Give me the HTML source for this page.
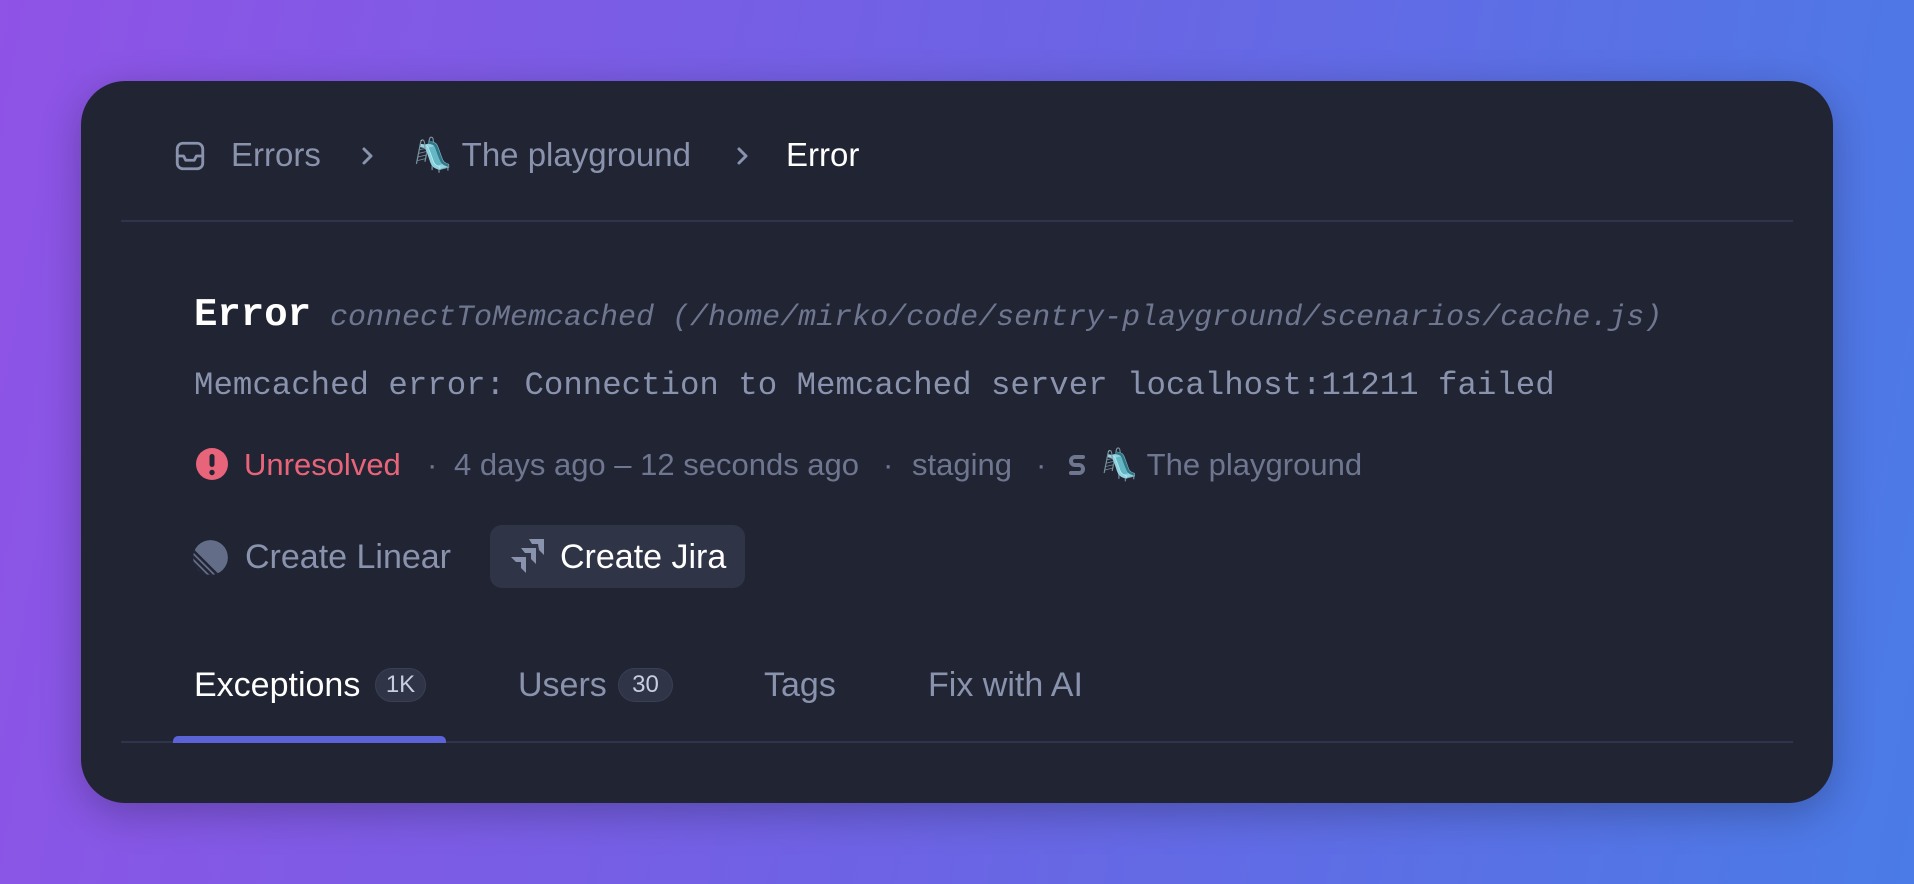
<!DOCTYPE html>
<html><head><meta charset="utf-8"><style>
*{margin:0;padding:0;box-sizing:border-box}
html,body{width:1914px;height:884px;overflow:hidden}
body{background:linear-gradient(100deg,#8f53e6 0%,#6d63e4 50%,#4a7be6 100%);font-family:"Liberation Sans",sans-serif;position:relative}
.card{position:absolute;left:81px;top:81px;width:1752px;height:722px;background:#212433;border-radius:44px;box-shadow:0 10px 40px rgba(0,0,0,.25)}
.a{position:absolute;white-space:nowrap;line-height:1}
.g{color:#8a93ad}
.w{color:#fff}
.mono{font-family:"Liberation Mono",monospace}
.line{position:absolute;left:40px;width:1672px;height:2px;background:#30344a}
.badge{position:absolute;height:34px;border-radius:17px;background:#2f3447;border:1px solid #3a3f55;color:#c8cde0;font-size:24px;line-height:32px;text-align:center}
</style></head><body>
<div class="card">
  <svg class="a" style="left:92px;top:58px" width="34" height="34" viewBox="0 0 24 24" fill="none" stroke="#8a93ad" stroke-width="2" stroke-linecap="round" stroke-linejoin="round"><rect x="3" y="3" width="18" height="18" rx="4"/><path d="M3 12h4.5l1.5 3h6l1.5-3H21"/></svg>
  <div class="a g" style="left:150px;top:57px;font-size:33px">Errors</div>
  <svg class="a" style="left:278px;top:64px" width="16" height="22" viewBox="0 0 16 22" fill="none" stroke="#8a93ad" stroke-width="3" stroke-linecap="round" stroke-linejoin="round"><path d="M5 4l7 7-7 7"/></svg>
  <div class="a g" style="left:331px;top:57px;font-size:33px">🛝 The playground</div>
  <svg class="a" style="left:653px;top:64px" width="16" height="22" viewBox="0 0 16 22" fill="none" stroke="#8a93ad" stroke-width="3" stroke-linecap="round" stroke-linejoin="round"><path d="M5 4l7 7-7 7"/></svg>
  <div class="a w" style="left:705px;top:57px;font-size:33px">Error</div>
  <div class="line" style="top:139px"></div>

  <div class="a w mono" style="left:113px;top:215px;font-size:39px;font-weight:bold">Error</div>
  <div class="a g mono" style="left:249px;top:222px;font-size:30px;font-style:italic;color:#6f7790">connectToMemcached (/home/mirko/code/sentry-playground/scenarios/cache.js)</div>
  <div class="a g mono" style="left:113px;top:289px;font-size:32.4px">Memcached error: Connection to Memcached server localhost:11211 failed</div>

  <svg class="a" style="left:114px;top:366px" width="34" height="34" viewBox="0 0 34 34"><circle cx="17" cy="17" r="16" fill="#e8647a"/><rect x="14.5" y="7" width="5" height="13" rx="2.5" fill="#212433"/><circle cx="17" cy="25.5" r="2.7" fill="#212433"/></svg>
  <div class="a" style="left:163px;top:368px;font-size:31px;color:#e8647a">Unresolved</div>
  <div class="a" style="left:346px;top:368px;font-size:31px;color:#6f7790">·</div>
  <div class="a" style="left:373px;top:368px;font-size:31px;color:#6f7790">4 days ago – 12 seconds ago</div>
  <div class="a" style="left:802px;top:368px;font-size:31px;color:#6f7790">·</div>
  <div class="a" style="left:831px;top:368px;font-size:31px;color:#6f7790">staging</div>
  <div class="a" style="left:955px;top:368px;font-size:31px;color:#6f7790">·</div>
  <svg class="a" style="left:985px;top:371px" width="22" height="26" viewBox="0 0 22 26" fill="none" stroke="#6f7790" stroke-width="4" stroke-linecap="round" stroke-linejoin="round"><path d="M17 5H9a4 4 0 0 0 0 8h4a4 4 0 0 1 0 8H5"/></svg>
  <div class="a" style="left:1019px;top:368px;font-size:31px;color:#6f7790">🛝 The playground</div>

  <svg class="a" style="left:111px;top:458px" width="37" height="37" viewBox="0 0 36 36"><defs><clipPath id="c"><circle cx="18" cy="18" r="17"/></clipPath></defs><g clip-path="url(#c)"><circle cx="18" cy="18" r="17" fill="#646d87"/><path d="M-2 14L22 38M-2 20L16 38M-2 26L10 38M-2 8L28 38" stroke="#212433" stroke-width="2.5"/></g></svg>
  <div class="a g" style="left:164px;top:459px;font-size:34px">Create Linear</div>
  <div class="a" style="left:409px;top:444px;width:255px;height:63px;border-radius:12px;background:#2f3447"></div>
  <svg class="a" style="left:428px;top:457px" width="36" height="38" viewBox="0 0 36 38" fill="#8a93ad"><path d="M20 1h15v16l-5-5-1-6h-6z"/><path d="M12 10h15v16l-5-5v-6h-6z"/><path d="M2 19h15v16l-5-5v-6H7z"/></svg>
  <div class="a w" style="left:479px;top:459px;font-size:34px">Create Jira</div>

  <div class="a w" style="left:113px;top:587px;font-size:34px">Exceptions</div>
  <div class="badge" style="left:294px;top:587px;width:51px">1K</div>
  <div class="a g" style="left:437px;top:587px;font-size:34px">Users</div>
  <div class="badge" style="left:537px;top:587px;width:55px">30</div>
  <div class="a g" style="left:683px;top:587px;font-size:34px">Tags</div>
  <div class="a g" style="left:847px;top:587px;font-size:34px">Fix with AI</div>
  <div class="line" style="top:660px"></div>
  <div class="a" style="left:92px;top:655px;width:273px;height:7px;border-radius:5px 5px 0 0;background:#5b63d6"></div>
</div>
</body></html>
